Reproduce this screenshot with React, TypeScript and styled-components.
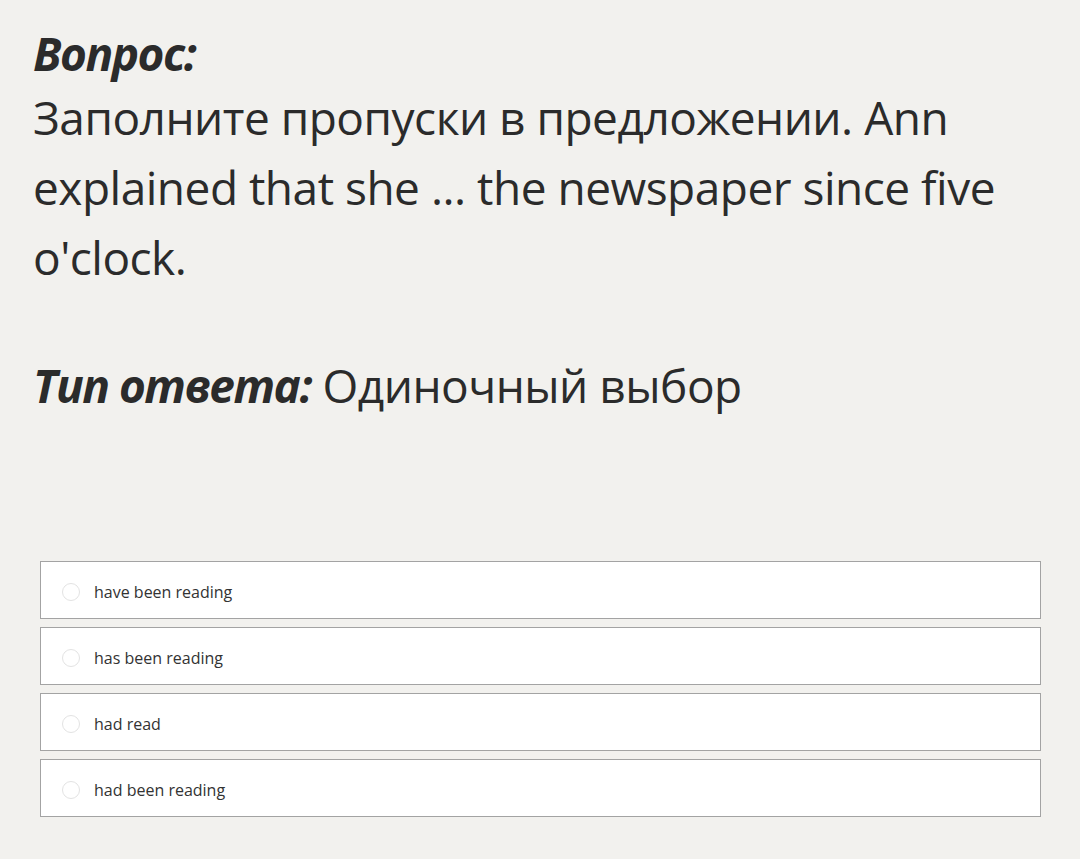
import React, { FC } from "react";
import styled, { createGlobalStyle } from "styled-components";

const GlobalStyle = createGlobalStyle`
  html, body {
    margin: 0;
    padding: 0;
    background: #f2f1ee;
  }
  body {
    font-family: "Open Sans", "Noto Sans", sans-serif;
    color: #2b2b2b;
  }
`;

const Page = styled.div`
  padding: 25px 33px 40px 33px;
`;

const Label = styled.span`
  font-weight: 700;
  font-style: italic;
  letter-spacing: -1.5px;
`;

const QuestionTitle = styled.div`
  font-size: 46px;
  line-height: 57px;
`;

const QuestionText = styled.div`
  font-size: 46px;
  line-height: 70px;
  letter-spacing: -0.5px;
`;

const AnswerType = styled.div`
  font-size: 46px;
  line-height: 60px;
  letter-spacing: -0.5px;
  margin-top: 63px;
`;

const Options = styled.div`
  display: flex;
  flex-direction: column;
  gap: 8px;
  margin-top: 146px;
  margin-left: 7px;
  width: 1001px;
`;

const OptionRow = styled.label`
  display: flex;
  align-items: center;
  box-sizing: border-box;
  height: 58px;
  padding: 3px 0 0 21px;
  background: #ffffff;
  border: 1px solid #a3a3a3;
  font-size: 16px;
  color: #333333;
  cursor: pointer;
`;

const Radio = styled.span`
  flex: none;
  width: 18px;
  height: 18px;
  border-radius: 50%;
  border: 1px solid #e3e3e3;
  margin-right: 14px;
  box-sizing: border-box;
`;

interface OptionProps {
  text: string;
}

const Option: FC<OptionProps> = props => (
  <OptionRow>
    <Radio />
    {props.text}
  </OptionRow>
);

const answers = [
  "have been reading",
  "has been reading",
  "had read",
  "had been reading",
];

const App: FC = () => (
  <Page>
    <GlobalStyle />
    <QuestionTitle>
      <Label>Вопрос:</Label>
    </QuestionTitle>
    <QuestionText>
      Заполните пропуски в предложении. Ann explained that she ... the
      newspaper since five o'clock.
    </QuestionText>
    <AnswerType>
      <Label>Тип ответа:</Label> Одиночный выбор
    </AnswerType>
    <Options>
      {answers.map(a => (
        <Option key={a} text={a} />
      ))}
    </Options>
  </Page>
);

export default App;
